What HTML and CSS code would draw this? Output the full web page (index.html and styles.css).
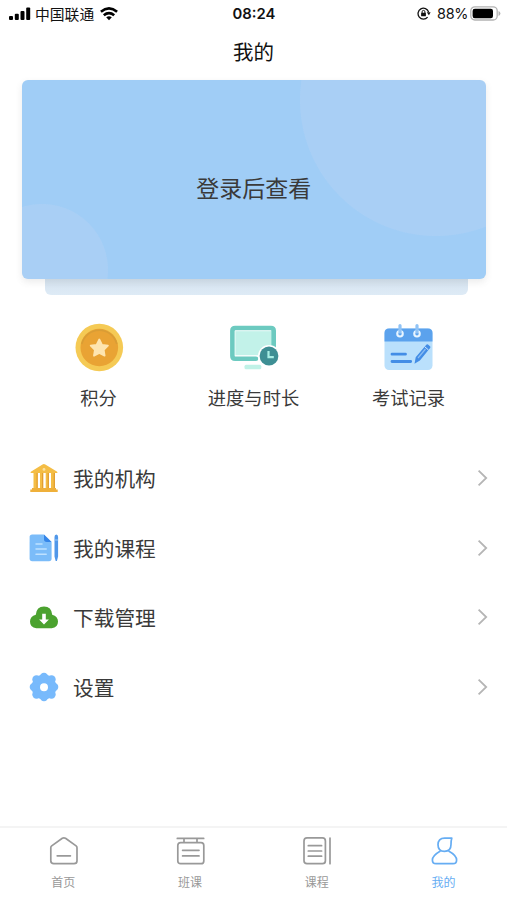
FILE: index.html
```html
<!DOCTYPE html>
<html lang="zh-CN">
<head>
<meta charset="utf-8">
<meta name="viewport" content="width=device-width, initial-scale=1">
<title>我的</title>
<link rel="stylesheet" href="styles.css">
</head>
<body>
<div class="app">
  <header class="status">
    <div class="status-left">
      <svg class="signal" width="22" height="14" viewBox="0 0 22 14"><rect x="0" y="9" width="4" height="4" rx="1"/><rect x="5.8" y="6.8" width="4" height="6.2" rx="1"/><rect x="11.5" y="4" width="4" height="9" rx="1"/><rect x="17.2" y="0.6" width="4" height="12.4" rx="1"/></svg>
      <span class="carrier">中国联通</span>
      <svg class="wifi" width="18" height="14" viewBox="0 0 18 14" fill="none" stroke="#000" stroke-width="2.7"><path d="M.9 4.7Q9-1.8 17.1 4.7"/><path d="M3.8 8.2Q9 4 14.2 8.2"/><path d="M6.2 10.3Q9 8 11.8 10.3L9 13.2Z" fill="#000" stroke="none"/></svg>
    </div>
    <div class="clock">08:24</div>
    <div class="status-right">
      <svg width="14" height="13" viewBox="0 0 14 13" fill="none" stroke="#111" stroke-width="1.3"><path d="M10.6 10.1A5.4 5.4 0 1 1 11.6 5"/><path d="M9.8 5.2h3.8l-1.7 3z" fill="#111" stroke="none"/><rect x="4.1" y="5.8" width="4.8" height="3.5" rx=".5" fill="#111" stroke="none"/><path d="M5.1 6V4.8a1.4 1.4 0 0 1 2.8 0V6" stroke-width="1"/></svg>
      <span class="percent">88%</span>
      <svg class="battery" width="31" height="15" viewBox="0 0 31 15"><rect x=".8" y=".8" width="26.4" height="13.2" rx="4" fill="#fff" stroke="#b3b3b3" stroke-width="1.3"/><rect x="2.6" y="2.7" width="20.4" height="9.6" rx="2.2"/><path d="M28.5 5v5q1.9-.8 1.9-2.5T28.5 5z" fill="#b3b3b3"/></svg>
    </div>
  </header>
  <h1 class="title">我的</h1>
  <section class="hero">
    <div class="card">登录后查看</div>
    <div class="plate"></div>
  </section>
  <nav class="shortcuts">
    <div class="shortcut">
      <svg width="52" height="52" viewBox="0 0 52 52"><circle cx="26.3" cy="25.5" r="23.8" fill="#f5ca55"/><circle cx="26.3" cy="25.5" r="18.8" fill="#e9a334"/><path d="M8.8 22A18 18 0 0 1 43.8 22" fill="none" stroke="#d99d35" stroke-width="1.6"/><path d="M26.3 17.5l2.7 5.3 5.9.9-4.2 4.2.9 5.8-5.3-2.7-5.3 2.7.9-5.8-4.2-4.2 5.9-.9z" fill="#fee5b0" stroke="#fee5b0" stroke-width="1.8" stroke-linejoin="round"/></svg>
      <span>积分</span>
    </div>
    <div class="shortcut">
      <svg width="52" height="52" viewBox="0 0 52 52"><rect x="7" y="8.7" width="37" height="24.5" fill="#c2f2e9"/><path d="M45.7 25V8.7Q45.7 6 43 6H7.1Q4.4 6 4.4 8.7V34Q4.4 36.7 7.1 36.7H28" fill="none" stroke="#6ccac0" stroke-width="4.6" stroke-linecap="round"/><path d="M7.3 33.8V8.9H42.8" fill="none" stroke="#fff" stroke-opacity=".45" stroke-width="1"/><rect x="16.5" y="42.7" width="16.8" height="4.6" rx="1.5" fill="#c0f2e7"/><circle cx="41" cy="34" r="11" fill="#fff"/><circle cx="41" cy="34" r="9.4" fill="#3e8f94"/><path d="M40.5 28.9v6.2h5.3" fill="none" stroke="#a8eee4" stroke-width="2.2"/></svg>
      <span>进度与时长</span>
    </div>
    <div class="shortcut">
      <svg width="52" height="52" viewBox="0 0 52 52"><rect x="1.5" y="6.5" width="48" height="41.5" rx="4.5" fill="#bae0fc"/><path d="M1.5 19.5V11q0-4.5 4.5-4.5h39q4.5 0 4.5 4.5v8.5z" fill="#5ba2ed"/><g fill="#e8f5ff"><circle cx="17" cy="11.8" r="3.8"/><circle cx="34" cy="11.8" r="3.8"/></g><g fill="#5ba2ed"><circle cx="17" cy="11.8" r="1.7"/><circle cx="34" cy="11.8" r="1.7"/></g><path d="M17 3.6v6.4M34 3.6v6.4" stroke="#90c3f6" stroke-width="3.2" stroke-linecap="round"/><path d="M9 32.2H22.5M9 39.5H27.7" stroke="#438de6" stroke-width="2.8" stroke-linecap="round"/><path d="M31.5 41.7l1.2-6.5L43.3 22.7q.8-.8 1.7-.1l2 1.7q.9.8.1 1.7L36.9 38.5z" fill="#438de6"/><path d="M35 36L42.5 27" stroke="#8bbdf3" stroke-width="1.2"/><path d="M41.7 24.7l3.7 3.2" stroke="#d3eafe" stroke-width="1"/></svg>
      <span>考试记录</span>
    </div>
  </nav>
  <main class="menu">
    <div class="row">
      <svg class="row-icon" width="30" height="30" viewBox="0 0 30 30"><path d="M1.5 10Q1.5 8.6 3 8L13.5 1.4q1.4-.9 2.8 0L27 8q1.5.7 1.5 2z" fill="#f4bd45"/><circle cx="15" cy="6.4" r="1.4" fill="#fbe1a1"/><g fill="#f4bd45"><path d="M4.5 9.5h4.2v16H4.5zM11 9.5h3.2v16H11zM16.7 9.5h3.2v16h-3.2zM22 9.5h4v16h-4z"/></g><path d="M8.1 10v15M13.6 10v15M19.3 10v15M25.3 10v15" stroke="#e29d30" stroke-width="1.2"/><path d="M3 25h24v1.5h1.7V29H1.3v-2.5H3z" fill="#efb03a"/></svg>
      <span>我的机构</span><svg class="chevron" width="12" height="18" viewBox="0 0 12 18"><path d="M1.6 1.7l7.6 7.3-7.6 7.3"/></svg>
    </div>
    <div class="row">
      <svg class="row-icon" width="30" height="30" viewBox="0 0 30 30"><path d="M3.2 1.5h11.6L22.6 9v16.6q0 2.6-2.6 2.6H3.2q-2.6 0-2.6-2.6V4.1q0-2.6 2.6-2.6z" fill="#7bbcf9"/><path d="M15 1.5L22.6 9h-4.8Q15 9 15 6.3z" fill="#3585e8"/><path d="M7 10.9h6M7 16.1h10.2M7 21.2h10.2" stroke="#bfe1ff" stroke-width="1.5" stroke-linecap="round"/><path d="M25.5 4q0-2.5 1.8-2.5T29.1 4v19.5L27.9 28h-1.2l-1.2-4.5z" fill="#5097e9"/><path d="M25.5 7h3.6" stroke="#9bcbfc"/></svg>
      <span>我的课程</span><svg class="chevron" width="12" height="18" viewBox="0 0 12 18"><path d="M1.6 1.7l7.6 7.3-7.6 7.3"/></svg>
    </div>
    <div class="row">
      <svg class="row-icon" width="30" height="30" viewBox="0 0 30 30"><path d="M7.3 26.2Q1 25.7 1 19.6q0-5.3 5.8-6.9Q7.5 4.4 15 4.4t8.2 8.3q5.8 1.6 5.8 6.9 0 6.1-6.3 6.6z" fill="#4ba22f"/><path d="M13.2 11.8h3.6v5.7h3.1L15 22.6l-4.9-5.1h3.1z" fill="#fff"/></svg>
      <span>下载管理</span><svg class="chevron" width="12" height="18" viewBox="0 0 12 18"><path d="M1.6 1.7l7.6 7.3-7.6 7.3"/></svg>
    </div>
    <div class="row">
      <svg class="row-icon" width="30" height="30" viewBox="0 0 30 30"><g fill="#78bafc"><circle cx="15" cy="15" r="12.4"/><circle cx="15" cy="4.9" r="4.2"/><circle cx="22.5" cy="7.5" r="4.2"/><circle cx="25.1" cy="15" r="4.2"/><circle cx="22.5" cy="22.5" r="4.2"/><circle cx="15" cy="25.1" r="4.2"/><circle cx="7.5" cy="22.5" r="4.2"/><circle cx="4.9" cy="15" r="4.2"/><circle cx="7.5" cy="7.5" r="4.2"/></g><circle cx="15" cy="15.3" r="4" fill="#fff"/></svg>
      <span>设置</span><svg class="chevron" width="12" height="18" viewBox="0 0 12 18"><path d="M1.6 1.7l7.6 7.3-7.6 7.3"/></svg>
    </div>
  </main>
  <footer class="tabs">
    <div class="tab">
      <svg width="30" height="30" viewBox="0 0 30 30"><path d="M2.8 11.8q0-1.2.9-1.9L14.3 2.3q1.6-1 3.2 0l10.6 7.6q.9.7.9 1.9v12.9q0 3-3 3H5.8q-3 0-3-3zM9.2 19.8h13.2"/></svg>
      <span>首页</span>
    </div>
    <div class="tab">
      <svg width="30" height="30" viewBox="0 0 30 30"><path d="M2.3 2.4h26.4M9 2.5v4M22 2.5v4M5.6 6.7h20.4q2.8 0 2.8 2.8v15.4q0 2.8-2.8 2.8H5.6q-2.8 0-2.8-2.8V9.5q0-2.8 2.8-2.8zM7.6 14.3H24M7.6 19.9H24"/></svg>
      <span>班课</span>
    </div>
    <div class="tab">
      <svg width="30" height="30" viewBox="0 0 30 30"><path d="M5 1.9h15.4q3 0 3 3v19.8q0 3-3 3H5q-3 0-3-3V4.9q0-3 3-3zM6.3 9.7h13.3M6.3 15h13.3M6.3 20.2h13.3M28 2v25.7"/></svg>
      <span>课程</span>
    </div>
    <div class="tab active">
      <svg width="30" height="30" viewBox="0 0 30 30"><path d="M15.6 2.1h7.2q-.8 2.5-.8 6.5 0 6.8-6.6 6.8-6.4 0-6.4-6.6 0-6.7 6.6-6.7zM11 15.3Q3.4 19.8 3.4 24q0 3.7 3.6 3.7h17q3.6 0 3.6-3.7 0-4.6-7.6-8.8"/></svg>
      <span>我的</span>
    </div>
  </footer>
</div>
</body>
</html>
```
FILE: styles.css
```css
* { box-sizing: border-box; }
body {
  margin: 0;
  background: #fff;
  color: #3a3a3a;
  font-family: "Noto Sans CJK SC", sans-serif;
}
svg { display: block; flex: none; }
.app { display: flex; flex-direction: column; height: 900px; overflow: hidden; }
.status {
  display: grid;
  grid-template-columns: 1fr auto 1fr;
  align-items: center;
  height: 27px;
  padding: 0 6px 0 9px;
  color: #111;
  flex: none;
}
.status-left, .status-right { display: flex; align-items: center; }
.status-right { justify-content: flex-end; }
.carrier { margin: 0 6px 0 4px; font-size: 14.8px; line-height: 20px; }
.clock { margin-right: 2px; font: 600 14.8px/20px Inter, sans-serif; }
.percent { margin: 1px 2px 0 6px; font: 400 14.4px/20px Inter, sans-serif; letter-spacing: -.35px; }
.title {
  margin: 0;
  height: 52.5px;
  font-size: 20.5px;
  font-weight: 400;
  line-height: 49px;
  text-align: center;
  color: #111;
  flex: none;
}
.hero { width: 463.5px; margin-left: 22px; flex: none; }
.card {
  position: relative;
  height: 199.5px;
  border-radius: 6px;
  padding-top: 7px;
  background:
    radial-gradient(circle at 20px 190px, #a9cff5 0 65.5px, transparent 66.5px),
    radial-gradient(circle at 414px 20px, #a9cff5 0 135.5px, transparent 136.5px),
    #a0cdf6;
  box-shadow: 0 3px 7px rgba(90, 90, 90, .12);
  font-size: 23px;
  line-height: 200px;
  text-align: center;
}
.plate {
  height: 16px;
  margin: 0 17.5px 0 23px;
  border-radius: 0 0 6px 6px;
  background: linear-gradient(#d5e3ef, #deebf6);
}
.shortcuts {
  display: grid;
  grid-template-columns: repeat(3, 155px);
  height: 148.4px;
  padding-top: 27px;
  margin-left: 21px;
  flex: none;
}
.shortcut { display: flex; flex-direction: column; align-items: center; font-size: 18.3px; line-height: 26px; }
.shortcut span { margin-top: 10px; }
.menu { flex: 1; }
.row { display: flex; align-items: center; height: 69.5px; padding: 0 18px 0 29px; font-size: 20.7px; line-height: 30px; }
.row span { margin-left: 14px; flex: 1; }
.chevron { fill: none; stroke: #b5b5b5; stroke-width: 1.8; }
.tabs { display: grid; grid-template-columns: repeat(4, 1fr); height: 74px; padding-top: 8px; border-top: 2px solid #f4f4f4; flex: none; }
.tab { display: flex; flex-direction: column; align-items: center; color: #999; font-size: 12px; line-height: 18px; }
.tab svg { fill: none; stroke: currentColor; stroke-width: 1.7; stroke-linejoin: round; stroke-linecap: round; }
.tab span { margin-top: 7px; }
.tab.active { color: #66adf3; }
```
